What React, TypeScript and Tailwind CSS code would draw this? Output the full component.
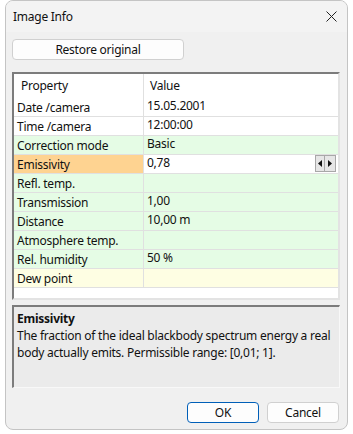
const rows = [
  { label: 'Date /camera', value: '15.05.2001', tone: 'white' },
  { label: 'Time /camera', value: '12:00:00', tone: 'white' },
  { label: 'Correction mode', value: 'Basic', tone: 'green' },
  { label: 'Emissivity', value: '0,78', tone: 'edit' },
  { label: 'Refl. temp.', value: '', tone: 'green' },
  { label: 'Transmission', value: '1,00', tone: 'green' },
  { label: 'Distance', value: '10,00 m', tone: 'green' },
  { label: 'Atmosphere temp.', value: '', tone: 'green' },
  { label: 'Rel. humidity', value: '50 %', tone: 'green' },
  { label: 'Dew point', value: '', tone: 'yellow' },
];

const labelBg: Record<string, string> = {
  white: 'bg-white',
  green: 'bg-[#e5fce5]',
  edit: 'bg-[#fed391]',
  yellow: 'bg-[#fefee3]',
};

const valueBg: Record<string, string> = {
  white: 'bg-white',
  green: 'bg-[#e5fce5]',
  edit: 'bg-white',
  yellow: 'bg-[#fefee3]',
};

function SpinButtons() {
  return (
    <div className="absolute right-[2px] top-0 flex h-[17px]">
      <div className="flex w-[10px] items-center justify-center border border-[#a8a8a8] bg-[#e6e6e6]">
        <svg width="4" height="7" viewBox="0 0 4 7"><path d="M4 0 L0 3.5 L4 7 Z" fill="#111" /></svg>
      </div>
      <div className="flex w-[11px] items-center justify-center border border-l-0 border-[#a8a8a8] bg-[#e6e6e6]">
        <svg width="4" height="7" viewBox="0 0 4 7"><path d="M0 0 L4 3.5 L0 7 Z" fill="#111" /></svg>
      </div>
    </div>
  );
}

export default function App() {
  return (
    <div className="h-[434px] w-[353px] bg-white px-[5px] pb-[4px] text-[12px] tracking-[-0.25px] text-[#111] [font-family:'Segoe_UI','Noto_Sans',sans-serif]">
      <div className="flex h-[430px] flex-col overflow-hidden rounded-[8px] border border-[#c4c4c4] bg-[#f0f0f0]">
        {/* title bar */}
        <div className="flex h-[31px] shrink-0 items-center justify-between bg-[#f3f3f3] pl-[7px] pr-[10px]">
          <span>Image Info</span>
          <svg width="11" height="11" viewBox="0 0 11 11">
            <path d="M0.5 0.5 L10.5 10.5 M10.5 0.5 L0.5 10.5" stroke="#222" strokeWidth="1" />
          </svg>
        </div>

        <div className="flex flex-1 flex-col px-[6px]">
          <button className="mt-[7px] h-[21px] w-[172px] rounded-[4px] border border-[#d0d0d0] bg-[#fdfdfd]">
            Restore original
          </button>

          {/* property grid */}
          <div className="mt-[12px] h-[228px] w-[328px] border-2 border-l-[#7c7c7c] border-t-[#7c7c7c] border-r-[#e3e3e3] border-b-[#e3e3e3] bg-white">
            <div className="flex h-[24px]">
              <div className="flex w-[130px] items-center border-r border-[#e0e0e0] pl-[7px]">Property</div>
              <div className="flex items-center pl-[6px]">Value</div>
            </div>
            {rows.map((row) => (
              <div key={row.label} className="flex h-[19px] border-b border-[#e0e0e0]">
                <div className={`flex w-[130px] items-center border-r border-[#e0e0e0] pl-[3px] pt-[1px] ${labelBg[row.tone]}`}>
                  {row.label}
                </div>
                <div className={`relative flex flex-1 items-center pb-[3px] pl-[3px] ${valueBg[row.tone]}`}>
                  {row.value}
                  {row.tone === 'edit' && <SpinButtons />}
                </div>
              </div>
            ))}
          </div>

          {/* description */}
          <div className="mt-[5px] h-[83px] w-[328px] border-l-2 border-t-2 border-r border-b border-l-[#7c7c7c] border-t-[#7c7c7c] border-r-[#f8f8f8] border-b-[#f8f8f8] bg-[#ebebeb] px-[3px] pt-[3px] leading-[17px]">
            <div className="font-bold">Emissivity</div>
            <div>The fraction of the ideal blackbody spectrum energy a real body actually emits. Permissible range: [0,01; 1].</div>
          </div>

          <div className="mt-[14px] flex justify-end gap-[8px] pr-[2px]">
            <button className="h-[21px] w-[72px] rounded-[4px] border border-[#005fb8] bg-[#fdfdfd]">OK</button>
            <button className="h-[21px] w-[72px] rounded-[4px] border border-[#d0d0d0] bg-[#fdfdfd]">Cancel</button>
          </div>
        </div>
      </div>
    </div>
  );
}
